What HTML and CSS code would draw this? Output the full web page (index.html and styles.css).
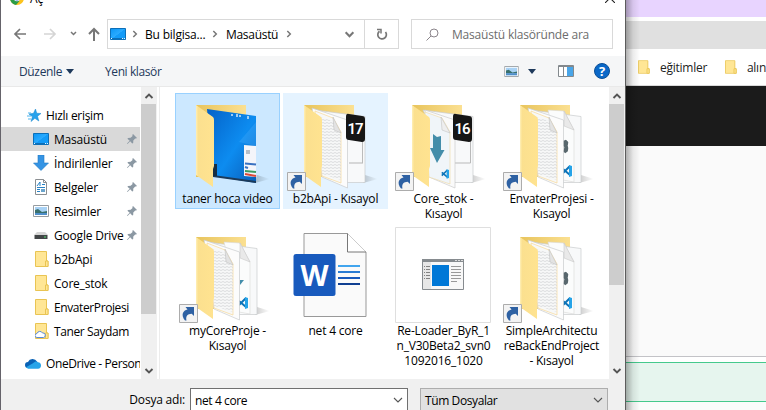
FILE: index.html
```html
<!DOCTYPE html>
<html lang="tr">
<head>
<meta charset="utf-8">
<title>Aç</title>
<link rel="stylesheet" href="styles.css">
</head>
<body>
<svg class="defs" width="0" height="0">
  <defs>
    <linearGradient id="flap" x1="0" x2="1" y1="0" y2="0"><stop offset="0" stop-color="#fff0b8"/><stop offset=".12" stop-color="#fbe08f"/><stop offset="1" stop-color="#ffe390"/></linearGradient>
    <linearGradient id="back" x1="0" x2="1" y1="0" y2="0"><stop offset="0" stop-color="#e8c45c"/><stop offset="1" stop-color="#fbe092"/></linearGradient>
    <linearGradient id="sky" x1="0" x2="1" y1="0" y2="1"><stop offset="0" stop-color="#0462c8"/><stop offset=".55" stop-color="#0d8cf0"/><stop offset="1" stop-color="#0a5db8"/></linearGradient>
    <linearGradient id="screen" x1="0" x2="1" y1="0" y2="1"><stop offset="0" stop-color="#0a95f5"/><stop offset=".5" stop-color="#2aabff"/><stop offset=".52" stop-color="#139bf8"/><stop offset="1" stop-color="#139bf8"/></linearGradient>
    <linearGradient id="shade" x1="0" x2="1"><stop offset="0" stop-color="#000" stop-opacity=".2"/><stop offset="1" stop-color="#000" stop-opacity="0"/></linearGradient>
    <pattern id="lines" width="4" height="3" patternUnits="userSpaceOnUse"><path d="M0 .5l2 1 2-1" fill="none" stroke="#d3d5d7" stroke-width=".8"/></pattern>
    <symbol id="folder-back" viewBox="0 0 96 96"><path d="M76 88l15-4-13-4z" fill="url(#shade)"/><path d="M17 10h50v72H17z" fill="url(#back)"/></symbol>
    <symbol id="folder-front" viewBox="0 0 96 96"><path d="M17 10l17 12q1 1 1 3v46l-1 3v18L17 80z" fill="url(#flap)"/></symbol>
    <symbol id="page-back" viewBox="0 0 96 96"><path d="M28 15l50 6.500v66H60z" fill="#f8f9fa" stroke="#c9cbcd" stroke-width=".7"/></symbol>
    <symbol id="page-mid" viewBox="0 0 96 96"><path d="M45 15l16 1 10 19v52l-11-2z" fill="#fbfcfc" stroke="#d9d9d6" stroke-width=".6"/><path d="M61 16v15l10 4z" fill="#e9e9e9" stroke="#c3c3c3" stroke-width=".5"/></symbol>
    <symbol id="page-front" viewBox="0 0 96 96"><path d="M25 13l35.500 12v68L35 82z" fill="#fcfcfc" stroke="#c9cbcd" stroke-width=".7"/><path d="M28 16l18 7 8 14v51l-19-7z" fill="#f7f8f8" stroke="#f6d998" stroke-width=".7"/><path d="M33 22l13 4 8 13v46l-19-6z" fill="url(#lines)"/><path d="M46 22l1 13 7 3z" fill="#e3e3e3" stroke="#bababa" stroke-width=".5"/></symbol>
    <symbol id="shortcut" viewBox="0 0 96 96"><path d="M.5 77.500h18v18H.5z" fill="#f3f3f3" stroke="#acacac"/><path d="M6 93.500C1.500 88 4 83.500 8.500 82.500L6.500 80H15v9l-2.300-2.300C8.500 87 6.500 89 7.500 93.500z" fill="#2e61a3"/></symbol>
    <symbol id="code" viewBox="0 0 10 14"><path d="M1 5l7 6M1 9l7-7" fill="none" stroke="#0c73b8" stroke-width="2"/><path d="M7 1l3 1v10L7 13z" fill="#25a3e8"/></symbol>
    <symbol id="gear" viewBox="0 0 6 16"><path d="M0 1l3-1 3 3-1 4 1 3-1 4-3 2-2-2 1-5-1-2z" fill="#58676d"/></symbol>
    <symbol id="chev" viewBox="0 0 10 10"><path d="M1.500 3L5 6.500 8.500 3" fill="none" stroke="currentColor" stroke-width="1.900"/></symbol>
    <symbol id="crumb" viewBox="0 0 6 8"><path d="M1.300 1L4.300 4l-3 3" fill="none" stroke="#777" stroke-width="1.500"/></symbol>
    <symbol id="small-folder" viewBox="0 0 14 16"><path d="M.5.5h11V10h1.500v5.500H.5z" fill="#ffe695" stroke="#e9c453"/><path d="M10.500 15.500V10H13v5.500z" fill="#ffe695" stroke="#e9c453"/></symbol>
    <symbol id="desktop" viewBox="0 0 16 12"><path d="M.5.5h15v11H.5z" fill="url(#screen)" stroke="#0c6fb8"/><path d="M1 10.500h1m10 0h1m1 0h1" stroke="#e5f5ff"/><path d="M2 10.500h10" stroke="#0c6fb8"/></symbol>
    <symbol id="picture" viewBox="0 0 16 12"><path d="M.5.5h15v11H.5z" fill="#fff" stroke="#969ca1"/><path d="M2 2h12v8H2z" fill="#a9d2f5"/><path d="M2 5l3-1 4 3 5-1v2H2z" fill="#39706d"/><path d="M2 8h12v2H2z" fill="#4f8fcb"/></symbol>
    <symbol id="pin" viewBox="0 0 10 10"><path d="M6 0l4 4-1 .6-.8-.2-1.900 2L6.200 9l-1 .5L3.200 7.300.5 10l-.5-.4 2.700-2.900L.4 4.800l.7-.9 2.500-.1 2-1.900L5.300 1z" fill="#8b98a3"/></symbol>
  </defs>
</svg>
<div class="screen">
  <main class="dialog">
    <header class="title">
      <svg width="14" height="14" viewBox="0 0 14 14"><circle cx="7" cy="7" r="7" fill="#fcc31e"/><path d="M7 7L1 3.500A7 7 0 0 0 6 14l3.500-4z" fill="#2b9c48"/><circle cx="7" cy="7" r="3.300" fill="#fff"/><circle cx="7" cy="7" r="2.600" fill="#3c7de0"/></svg>
      <span>Aç</span>
      <svg class="close" width="10" height="10" viewBox="0 0 10 10"><path d="M0 0l10 10M10 0L0 10" stroke="#222" stroke-width="1.100"/></svg>
    </header>
    <nav class="nav">
      <div class="arrows">
        <svg width="84" height="14" viewBox="0 0 84 14" fill="none" stroke="#777" stroke-width="1.700"><path d="M12 7H1M6 2L1 7l5 5"/><path stroke="#d5d5d5" d="M30 7h11M36 2l5 5-5 5"/><path d="M57 5l2.500 2.500L62 5" stroke-width="1.500"/><path d="M80 14V2M75 7l5-5 5 5" stroke-width="2"/></svg>
      </div>
      <div class="address">
        <svg width="16" height="12"><use href="#desktop"/></svg>
        <svg class="crumb c1" width="6" height="8"><use href="#crumb"/></svg>
        <span class="path-a">Bu bilgisa...</span>
        <svg class="crumb c2" width="6" height="8"><use href="#crumb"/></svg>
        <span class="path-b">Masaüstü</span>
        <svg class="crumb c3" width="6" height="8"><use href="#crumb"/></svg>
        <svg class="drop" width="11" height="11"><use href="#chev"/></svg>
        <div class="refresh"><svg width="12" height="13" viewBox="0 0 12 13" fill="none" stroke="#777" stroke-width="1.700"><path d="M3.500 3.200A4.300 4.300 0 1 0 9.500 4"/><path d="M1 1.500h4v4" stroke-width="1.500"/></svg></div>
      </div>
      <div class="search">
        <svg width="13" height="13" viewBox="0 0 13 13" fill="none" stroke="#8b858b" stroke-width="1"><circle cx="8" cy="5" r="4"/><path d="M5 8L.5 12.500"/></svg>
        <span>Masaüstü klasöründe ara</span>
      </div>
    </nav>
    <div class="toolbar">
      <span class="organize">Düzenle</span><i class="caret"></i>
      <span class="new">Yeni klasör</span>
      <div class="tools">
        <svg width="15" height="11" viewBox="0 0 16 12"><use href="#picture"/></svg><i class="caret"></i>
        <svg class="pane" width="16" height="12" viewBox="0 0 16 12"><path d="M.5.500h15v11H.5z" fill="#fff" stroke="#83898d"/><path d="M1 1.500h14M5.500 2v10" stroke="#83898d"/><path d="M9 2h6v9H9z" fill="#49a5e8"/></svg>
        <svg class="help" width="16" height="16"><circle cx="8" cy="8" r="7.500" fill="#0a68c8" stroke="#0b4f96"/><text x="8" y="12.500" text-anchor="middle" class="mark">?</text></svg>
      </div>
    </div>
    <section class="body">
      <aside class="side">
        <div class="item head"><svg width="14" height="13" viewBox="0 0 14 13"><path d="M8.500 0l1.200 4.200 4.300.3-3.500 2.700 1.300 4.800-3.900-2.700L4 12.500l1.400-4.700L2 5l4.500-.7z" fill="#27a2ec" stroke="#1686ce" stroke-width=".5"/><path d="M1 4h3M0 7h4M1 10h3" stroke="#51b5ed"/></svg><span>Hızlı erişim</span></div>
        <div class="item on"><svg width="16" height="12"><use href="#desktop"/></svg><span>Masaüstü</span><svg class="pin" width="10" height="10"><use href="#pin"/></svg></div>
        <div class="item"><svg width="16" height="16"><path d="M5 0h6v8h4.500L8 15.500.5 8H5z" fill="#3594e4" stroke="#2379c2" stroke-width=".6"/></svg><span>İndirilenler</span><svg class="pin" width="10" height="10"><use href="#pin"/></svg></div>
        <div class="item"><svg width="16" height="16"><path d="M2.500.5h8l3 3v12h-11z" fill="#fff" stroke="#8b8f92"/><path d="M10.500.5v3h3" fill="none" stroke="#8b8f92"/><path d="M4 7l3-4v4M4 8.500h8M4 10.500h3M4 12.500h3M9 5.500h3" fill="none" stroke="#2882c5"/><path d="M8 10h4v3H8z" fill="#6aa4cc"/></svg><span>Belgeler</span><svg class="pin" width="10" height="10"><use href="#pin"/></svg></div>
        <div class="item"><svg width="16" height="12"><use href="#picture"/></svg><span>Resimler</span><svg class="pin" width="10" height="10"><use href="#pin"/></svg></div>
        <div class="item"><svg width="16" height="9"><path d="M4 1h8l3 3H1z" fill="#d5d5d5"/><path d="M1.500 4h13v4h-13z" fill="#424547"/><path d="M11 5.500h2v1h-2z" fill="#52e071"/></svg><span>Google Drive</span><svg class="pin" width="10" height="10"><use href="#pin"/></svg></div>
        <div class="item file"><svg width="14" height="16"><use href="#small-folder"/></svg><span>b2bApi</span></div>
        <div class="item file"><svg width="14" height="16"><use href="#small-folder"/></svg><span>Core_stok</span></div>
        <div class="item file"><svg width="14" height="16"><use href="#small-folder"/></svg><span class="tight">EnvaterProjesi</span></div>
        <div class="item file"><svg width="14" height="16"><use href="#small-folder"/><path d="M2 14.500a2 2 0 0 1 0-4 3 3 0 0 1 5.500-.5 2.300 2.300 0 0 1 1 4.500z" fill="#fff" stroke="#5b8bd6"/></svg><span class="tight">Taner Saydam</span></div>
        <div class="item cloud"><svg width="16" height="11" viewBox="0 0 16 11"><path d="M3 10a3 3 0 0 1 0-6 5 5 0 0 1 9-.5L13 8z" fill="#0a62b5"/><path d="M3 10.700l-2-1.500 7-4c2-2 4-2 5-1 4 0 4 6.500 0 6.500z" fill="#27a4e9"/></svg><span class="tight">OneDrive - Person</span></div>
      </aside>
      <div class="scroll s1"><svg width="10" height="10" class="up"><use href="#chev"/></svg><div class="thumb"></div><svg width="10" height="10"><use href="#chev"/></svg></div>
      <div class="files">
        <figure class="tile selected">
          <svg width="96" height="96"><use href="#folder-back"/><path d="M28 14l49 7v67l-43-7z" fill="url(#sky)"/><path d="M60 47l17-20v24z" fill="#4bb4ff" opacity=".3"/><path d="M34 80l43 6v2l-43-6z" fill="#1c3a59"/><path d="M34 69h4v12h-4z" fill="#162e43"/><path d="M65 50l12 1v31l-12-1z" fill="#f4f5fa"/><path d="M67 55h4v4h-4z" fill="#b6bec8"/><path d="M66 68.500l11 1M66 72l3 1" stroke="#3971c1" stroke-width="2"/><path d="M66 76l11 1" stroke="#3b9b62" stroke-width="2"/><path d="M66 79l11 2" stroke="#db4839" stroke-width="2"/><path d="M53 19v2m5-2v3m3-2v2m8-1v3" stroke="#d4e8f8" stroke-width="1.500"/><use href="#folder-front"/></svg>
          <figcaption>taner hoca video</figcaption>
        </figure>
        <figure class="tile hover">
          <svg width="96" height="96"><use href="#folder-back"/><use href="#page-back"/><path d="M62 68h14" stroke="#b5b5b5"/><path d="M75.500 45v23" stroke="#bbb"/><use href="#page-front"/><path d="M59 22q0-4 3-3l13 2q3 0 3 3v20q0 3-3 3l-13-2q-3 0-3-3z" fill="#161616"/><text x="68" y="39" text-anchor="middle" class="num">17</text><use href="#folder-front"/><use href="#shortcut"/></svg>
          <figcaption>b2bApi - Kısayol</figcaption>
        </figure>
        <figure class="tile">
          <svg width="96" height="96"><use href="#folder-back"/><use href="#page-back"/><path d="M60 68h15.500V45" fill="none" stroke="#b9b9b9"/><path d="M30 15l30 10v68L34 82z" fill="#fafafa" stroke="#ccc" stroke-width=".7"/><path d="M30 17l17 6 8 14v52l-21-7z" fill="#f0f5f9" stroke="#efd8a2" stroke-width=".6"/><path d="M46 22l1 13 8 3z" fill="#eee" stroke="#bbb" stroke-width=".5"/><path d="M38 39l4 3 4-1v14h3.500l-7.500 13-7-15h3z" fill="#438daa"/><use href="#code" x="46" y="72" width="8" height="14"/><path d="M58 22q0-4 3-3l13 2q3 0 3 3v20q0 3-3 3l-13-2q-3 0-3-3z" fill="#161616"/><text x="67" y="39" text-anchor="middle" class="num">16</text><use href="#folder-front"/><use href="#shortcut"/></svg>
          <figcaption>Core_stok -<br>Kısayol</figcaption>
        </figure>
        <figure class="tile">
          <svg width="96" height="96"><use href="#folder-back"/><use href="#page-back"/><use href="#page-mid"/><use href="#code" x="59" y="69" width="10" height="14"/><use href="#page-front"/><use href="#gear" x="60.500" y="43" width="5" height="17"/><use href="#folder-front"/><use href="#shortcut"/></svg>
          <figcaption>EnvaterProjesi -<br>Kısayol</figcaption>
        </figure>
        <figure class="tile">
          <svg width="96" height="96"><use href="#folder-back"/><use href="#page-back"/><use href="#page-mid"/><path d="M61 53l4 0-4 5z" fill="#438daa"/><use href="#code" x="59" y="69" width="10" height="14"/><use href="#page-front"/><use href="#folder-front"/><use href="#shortcut"/></svg>
          <figcaption>myCoreProje -<br>Kısayol</figcaption>
        </figure>
        <figure class="tile">
          <svg width="96" height="96"><path d="M17 6.500h43.500L79 25v64.500H17z" fill="#fafafa" stroke="#999"/><path d="M60.500 6.500V25H79" fill="#fff" stroke="#777"/><rect x="6.500" y="27" width="42" height="42" rx="2.500" fill="#185abd"/><path d="M51 39h22" stroke="#41a5ee" stroke-width="2"/><path d="M51 45h22" stroke="#2b7cd3" stroke-width="2"/><path d="M51 51h22" stroke="#185abd" stroke-width="2"/><path d="M51 57h22" stroke="#103f91" stroke-width="2"/><text x="27.500" y="59" text-anchor="middle" class="word">W</text></svg>
          <figcaption>net 4 core</figcaption>
        </figure>
        <figure class="tile">
          <svg width="96" height="96"><path d="M.5.5h95v95H.5z" fill="#fff" stroke="#dfdfdf"/><path d="M27.500 32.500h41v30h-41z" fill="#f8f8f8" stroke="#868b8f"/><path d="M27 32h42v3H27z" fill="#868b8f"/><path d="M60 33.500h2m1 0h2m1 0h2" stroke="#ddd"/><path d="M28 35h8v27h-8z" fill="#e7e7e7"/><path d="M29 39.500h6m-6 3h6m-6 3h6m-6 3h6m-6 3h6" stroke="#838383" stroke-dasharray="1 1 4 1"/><path d="M37 38h17v21H37z" fill="#0078d7"/><path d="M56 39.500h10m-10 3h10m-10 3h10m-10 3h10m-10 3h10m-10 3h6" stroke="#999"/></svg>
          <figcaption>Re-Loader_ByR_1<br>n_V30Beta2_svn0<br>1092016_1020</figcaption>
        </figure>
        <figure class="tile">
          <svg width="96" height="96"><use href="#folder-back"/><use href="#page-back"/><use href="#page-mid"/><use href="#code" x="59" y="69" width="10" height="14"/><use href="#page-front"/><use href="#gear" x="60.500" y="43" width="5" height="17"/><use href="#folder-front"/><use href="#shortcut"/></svg>
          <figcaption>SimpleArchitectu<br>reBackEndProject<br>- Kısayol</figcaption>
        </figure>
      </div>
      <div class="scroll s2"><svg width="10" height="10" class="up"><use href="#chev"/></svg><div class="thumb"></div><svg width="10" height="10"><use href="#chev"/></svg></div>
    </section>
    <footer class="foot">
      <label>Dosya adı:</label>
      <div class="field name"><span>net 4 core</span><svg width="10" height="10" viewBox="0 0 10 10"><path d="M1 3l4 4 4-4" fill="none" stroke="#555" stroke-width="1.100"/></svg></div>
      <div class="field type"><span>Tüm Dosyalar</span><svg width="10" height="10" viewBox="0 0 10 10"><path d="M1 3l4 4 4-4" fill="none" stroke="#555" stroke-width="1.100"/></svg></div>
    </footer>
  </main>
  <div class="browser">
    <div class="tabs"></div>
    <div class="url"></div>
    <div class="bookmarks">
      <svg width="12" height="14" viewBox="0 0 14 16"><use href="#small-folder"/></svg><span class="bm1">eğitimler</span>
      <svg width="12" height="14" viewBox="0 0 14 16"><use href="#small-folder"/></svg><span class="bm2">alın</span>
    </div>
    <div class="black"></div>
    <div class="page"></div>
    <div class="alert"></div>
    <div class="rest"></div>
  </div>
</div>
</body>
</html>
```
FILE: styles.css
```css
* { box-sizing: border-box; }
body { margin: 0; background: #fafafa; }
.defs { position: absolute; }
svg { display: block; flex: none; }
.screen {
  display: flex;
  width: 766px;
  height: 410px;
  overflow: hidden;
  font: 12px/15px "Open Sans", "Noto Sans", sans-serif;
  letter-spacing: -0.2px;
  color: #000;
  white-space: nowrap;
}
.dialog {
  display: flex;
  flex-direction: column;
  flex: none;
  width: 626px;
  height: 410px;
  background: #fff;
  border-left: 1px solid #65636a;
  border-right: 1px solid #5c5c5c;
}
.title { display: flex; height: 11px; padding: 0 9px 0 9px; }
.title svg { margin-top: -9px; }
.title span { margin: -9px 0 0 6px; }
.title .close { margin: -7px 1px 0 auto; }

.nav { display: flex; height: 45px; padding-top: 8px; }
.arrows { width: 106px; padding: 8px 0 0 13px; }
.arrows svg { overflow: visible; }
.address { display: flex; align-items: center; width: 292px; height: 30px; border: 1px solid #d9d9d9; padding-left: 2px; }
.crumb.c1 { margin-left: 6px; }
.path-a { width: 60px; margin-left: 7px; }
.crumb.c2 { margin-left: 7px; }
.path-b { width: 52px; margin-left: 8px; letter-spacing: -0.3px; }
.crumb.c3 { margin-left: 8px; }
.drop { margin-left: auto; color: #777; margin-right: 9px; }
.refresh { display: flex; align-items: center; justify-content: center; width: 34px; height: 28px; border-left: 1px solid #d9d9d9; }
.search { display: flex; align-items: center; width: 202px; height: 30px; margin-left: 12px; padding-left: 14px; border: 1px solid #d9d9d9; color: #6d6d6d; }
.search span { margin-left: 13px; }

.toolbar { display: flex; align-items: center; height: 31px; padding: 0 15px 0 18px; background: #f5f6f7; border-bottom: 1px solid #e9e9e9; color: #1e395b; }
.organize { width: 42px; letter-spacing: -0.35px; }
.caret { border: 4px solid transparent; border-top: 5px solid #1e395b; border-bottom: 0; }
.toolbar > .caret { margin-left: 5px; }
.new { margin-left: 31px; letter-spacing: -0.4px; }
.tools { display: flex; align-items: center; margin-left: auto; }
.tools .caret { margin-left: 9px; }
.pane { margin-left: 22px; }
.help { margin-left: 20px; }
.mark { font: bold 13px "Open Sans", sans-serif; fill: #fff; }

.body { display: flex; height: 292px; }
.side { width: 140px; padding-top: 16px; overflow: hidden; }
.item { display: flex; align-items: center; width: 139px; height: 24px; padding-left: 32px; }
.item span { margin-left: 5px; }
.item .tight { letter-spacing: -0.4px; }
.item.head { padding-left: 26px; letter-spacing: -0.3px; }
.item.file { padding-left: 34px; }
.item.on { background: #d9d9d9; }
.item.cloud { margin-top: 8px; padding-left: 24px; overflow: hidden; }
.pin { margin-left: auto; margin-right: 3px; }
.scroll { display: flex; flex-direction: column; align-items: center; justify-content: space-between; width: 16px; height: 292px; padding: 4px 0 3px; background: #f0f0f0; color: #555; }
.scroll .up { transform: rotate(180deg); }
.thumb { width: 15px; align-self: flex-start; background: #cdcdcd; }
.s1 .thumb { height: 210px; margin: 3px 0 auto; }
.s2 .thumb { height: 181px; margin: 3px 0 auto; }
.files { display: grid; grid-template-columns: repeat(4, 105px); grid-template-rows: 116px 148px; column-gap: 3px; row-gap: 16px; width: 449px; margin-left: 2px; padding: 6px 0 0 15px; border-left: 1px solid #ececec; }
.s2 { margin-left: 1px; }
.tile { margin: 0; padding-top: 2px; text-align: center; }
.tile svg { margin: 0 0 0 4px; }
.tile.selected { background: #cce8ff; box-shadow: inset 0 0 0 1px #99d1ff; }
.tile.hover { background: #e5f3ff; }
.num { font: 600 15px/15px "Roboto", sans-serif; fill: #fff; letter-spacing: -1px; }
.word { font: bold 29px "Open Sans", sans-serif; fill: #fff; letter-spacing: 0; }

.foot { display: flex; align-items: flex-start; height: 31px; padding-top: 9px; background: #f0f0f0; }
.foot label { width: 189px; padding: 4px 5px 0 0; text-align: right; }
.field { display: flex; align-items: center; justify-content: space-between; height: 24px; padding: 0 4px; background: #fff; border: 1px solid #707070; }
.name { width: 218px; letter-spacing: -0.4px; }
.type { width: 188px; margin-left: 12px; background: #e1e1e1; border-color: #adadad; letter-spacing: -0.4px; }

.browser { flex: 1; background: #fff; position: relative; display: flex; flex-direction: column; overflow: hidden; }
.browser::after { content: ""; position: absolute; inset: 0 auto 0 0; width: 14px; background: linear-gradient(90deg, rgba(0,0,0,.3), rgba(0,0,0,.08) 50%, rgba(0,0,0,0)); }
.tabs { height: 17px; background: #e8d4ff; }
.url { height: 28px; margin-top: 4px; background: #e0e0e0; }
.bookmarks { display: flex; align-items: center; height: 37px; border-bottom: 1px solid #d9d9d9; padding-left: 12px; color: #222; letter-spacing: -.25px; }
.bm1 { width: 65px; margin-left: 10px; }
.bm2 { margin-left: 10px; }
.black { height: 60px; background: #1b1b1b; }
.page { height: 211px; background: #fafafa; border-bottom: 1px solid #c3c3c7; }
.alert { height: 40px; margin-top: 5px; background: #e6f5ee; border: solid #45c98c; border-width: 1px 0; }
.rest { flex: 1; background: #fafcfb; }
```
